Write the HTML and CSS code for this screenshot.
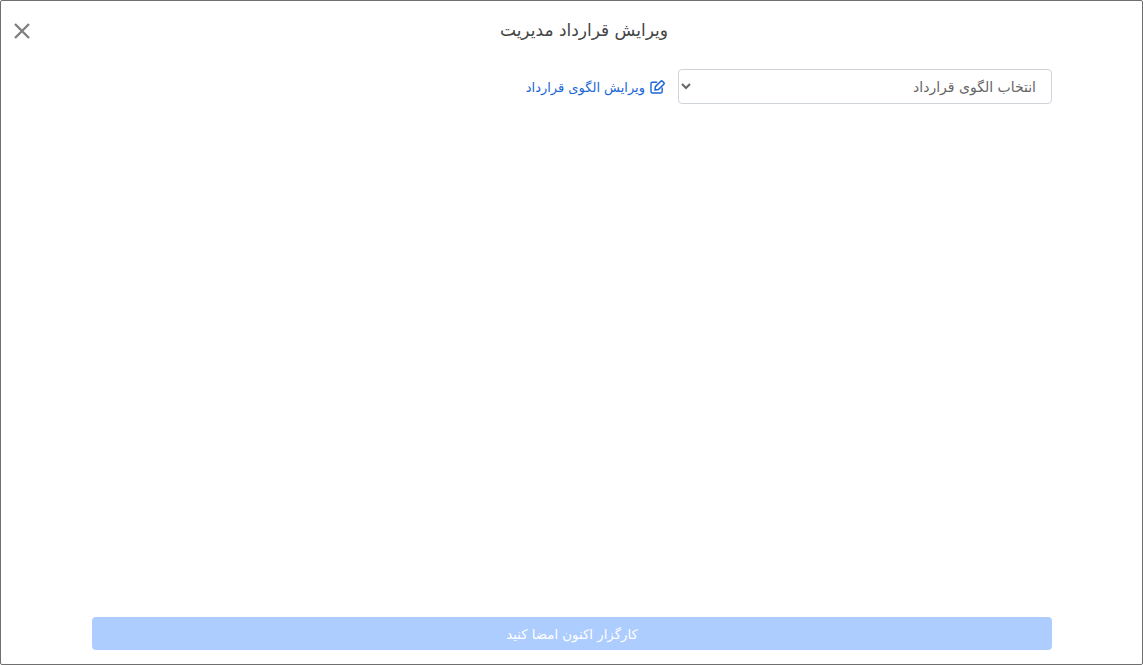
FILE: index.html
```html
<!DOCTYPE html>
<html lang="fa" dir="rtl">

<head>
    <meta charset="UTF-8">
    <title>ویرایش قرارداد مدیریت</title>
    <link rel="stylesheet" href="styles.css">
</head>

<body>
    <div class="modal">
        <div class="modal-header">
            <h1 class="modal-title">ویرایش قرارداد مدیریت</h1>
            <button class="close-btn" type="button" aria-label="بستن">
                <svg width="18" height="18" viewBox="0 0 18 18">
                    <path d="M2 2 L16 16 M16 2 L2 16" stroke="#808080" stroke-width="2.4" fill="none" />
                </svg>
            </button>
        </div>
        <div class="modal-body">
            <div class="template-row">
                <select class="template-select">
                    <option>انتخاب الگوی قرارداد</option>
                </select>
                <a class="edit-link" href="#">
                    <svg width="15" height="14" viewBox="0 0 15 14">
                        <path d="M12.2 7.6 V11.6 A1.4 1.4 0 0 1 10.8 13 H2.4 A1.4 1.4 0 0 1 1 11.6 V3.6 A1.4 1.4 0 0 1 2.4 2.2 H7.2" stroke="#1a66d6" stroke-width="1.4" fill="none" />
                        <path d="M5.4 6.6 L10.8 1.2 Q11.6 0.5 12.4 1.2 L13.8 2.6 Q14.5 3.4 13.8 4.2 L8.4 9.6 L5 10 Z" stroke="#1a66d6" stroke-width="1.5" fill="none" />
                    </svg>
                    <span>ویرایش الگوی قرارداد</span>
                </a>
            </div>
        </div>
        <div class="modal-footer">
            <button class="sign-btn" type="button">کارگزار اکنون امضا کنید</button>
        </div>
    </div>
</body>

</html>
```
FILE: styles.css
```css
* {
    box-sizing: border-box;
}

html,
body {
    height: 100%;
}

body {
    margin: 0;
    background: #fff;
    font-family: "DejaVu Sans", sans-serif;
    overflow: hidden;
}

.modal {
    height: 665px;
    display: flex;
    flex-direction: column;
    background: #fff;
    border: 1px solid #6f6f6f;
    border-radius: 2px;
}

.modal-header {
    height: 58px;
    display: flex;
    align-items: center;
    justify-content: center;
    padding-left: 25px;
    position: relative;
}

.modal-title {
    margin: 0;
    font-size: 17px;
    font-weight: 400;
    color: #444;
}

.close-btn {
    position: absolute;
    left: 12px;
    top: 21px;
    width: 18px;
    height: 18px;
    padding: 0;
    border: none;
    background: none;
}

.modal-body {
    flex: 1;
    padding: 10px 90px 0;
}

.template-row {
    display: flex;
    align-items: center;
    gap: 13px;
}

.template-select {
    width: 374px;
    height: 35px;
    padding: 0 11px 0 0;
    border: 1px solid #ced4da;
    border-radius: 4px;
    background: #fff;
    color: #666;
    font-family: inherit;
    font-size: 14px;
}

.edit-link {
    display: flex;
    align-items: center;
    gap: 5px;
    padding-top: 1px;
    color: #1a66d6;
    font-size: 13px;
    text-decoration: none;
}

.modal-footer {
    padding: 0 90px 14px 91px;
}

.sign-btn {
    display: block;
    width: 100%;
    height: 33px;
    padding: 1px 0 0;
    border: none;
    border-radius: 4px;
    background: #aecdff;
    color: #fff;
    font-family: inherit;
    font-size: 13.3px;
}
```
